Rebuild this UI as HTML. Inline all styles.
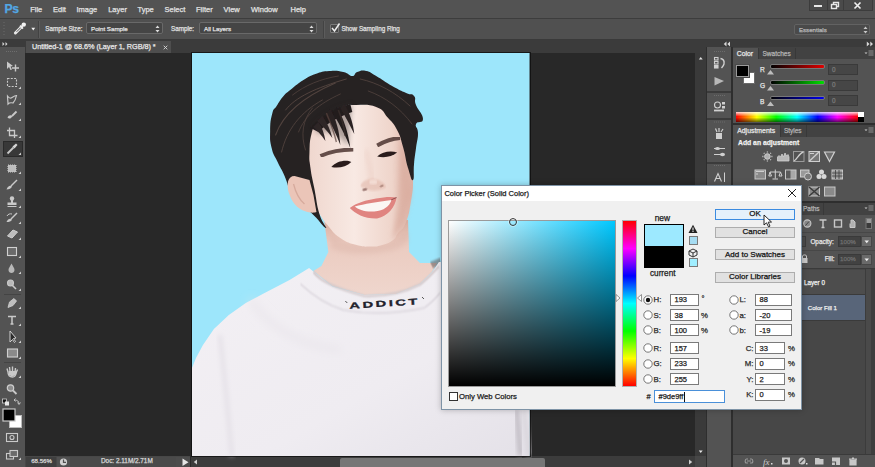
<!DOCTYPE html>
<html><head><meta charset="utf-8"><style>
*{margin:0;padding:0;box-sizing:border-box}
html,body{width:875px;height:467px;overflow:hidden;background:#535353;font-family:"Liberation Sans",sans-serif;position:relative}
.a{position:absolute}
.t{position:absolute;white-space:nowrap;line-height:1;-webkit-text-stroke:0.25px currentColor}
.ui{color:#dcdcdc}
svg{overflow:visible}
</style></head><body>
<div class="a" style="left:0px;top:0px;width:875px;height:18px;background:#535353;"></div>
<div class="a" style="left:0px;top:18px;width:875px;height:1px;background:#3d3d3d;"></div>
<div class="a" style="left:0px;top:19px;width:875px;height:21px;background:#505050;"></div>
<div class="a" style="left:0px;top:39px;width:875px;height:1px;background:#3a3a3a;"></div>
<div class="a" style="left:0px;top:40px;width:25px;height:427px;background:#535353;"></div>
<div class="a" style="left:0px;top:40px;width:25px;height:7px;background:#3b3b3b;"></div>
<div class="a" style="left:25px;top:40px;width:681px;height:13px;background:#3b3b3b;"></div>
<div class="a" style="left:25px;top:53px;width:670px;height:403px;background:#282828;"></div>
<div class="a" style="left:25px;top:456px;width:166px;height:11px;background:#474747;"></div>
<div class="a" style="left:191px;top:456px;width:504px;height:11px;background:#3c3c3c;"></div>
<div class="a" style="left:695px;top:53px;width:11px;height:403px;background:#3a3a3a;"></div>
<div class="a" style="left:695px;top:456px;width:11px;height:11px;background:#474747;"></div>
<div class="a" style="left:706px;top:40px;width:169px;height:7px;background:#3b3b3b;"></div>
<div class="a" style="left:706px;top:47px;width:1px;height:420px;background:#2e2e2e;"></div>
<div class="a" style="left:707px;top:47px;width:24px;height:420px;background:#535353;"></div>
<div class="a" style="left:731px;top:47px;width:2px;height:420px;background:#2e2e2e;"></div>
<div class="a" style="left:733px;top:47px;width:142px;height:420px;background:#535353;"></div>
<div class="t" style="left:4.5px;top:3.2px;font-size:12.2px;color:#52a7e4;font-weight:700;letter-spacing:-0.3px">Ps</div>
<div class="t" style="left:30.2px;top:5.5px;font-size:7.5px;color:#e2e2e2;font-weight:400;">File</div>
<div class="t" style="left:53px;top:5.5px;font-size:7.5px;color:#e2e2e2;font-weight:400;">Edit</div>
<div class="t" style="left:76.4px;top:5.5px;font-size:7.5px;color:#e2e2e2;font-weight:400;">Image</div>
<div class="t" style="left:108.2px;top:5.5px;font-size:7.5px;color:#e2e2e2;font-weight:400;">Layer</div>
<div class="t" style="left:137.5px;top:5.5px;font-size:7.5px;color:#e2e2e2;font-weight:400;">Type</div>
<div class="t" style="left:164.5px;top:5.5px;font-size:7.5px;color:#e2e2e2;font-weight:400;">Select</div>
<div class="t" style="left:196px;top:5.5px;font-size:7.5px;color:#e2e2e2;font-weight:400;">Filter</div>
<div class="t" style="left:223.6px;top:5.5px;font-size:7.5px;color:#e2e2e2;font-weight:400;">View</div>
<div class="t" style="left:251px;top:5.5px;font-size:7.5px;color:#e2e2e2;font-weight:400;">Window</div>
<div class="t" style="left:290.5px;top:5.5px;font-size:7.5px;color:#e2e2e2;font-weight:400;">Help</div>
<div class="a" style="left:809px;top:0px;width:64px;height:11px;background:#4a4a4a;border:1px solid #3c3c3c;border-top:none"></div>
<div class="a" style="left:827px;top:0px;width:1px;height:11px;background:#3c3c3c;"></div>
<div class="a" style="left:843px;top:0px;width:1px;height:11px;background:#3c3c3c;"></div>
<div class="a" style="left:814px;top:5px;width:8px;height:2px;background:#e8e8e8;"></div>
<svg class="a" style="left:830px;top:1px" width="11" height="9"><rect x="1.5" y="3.5" width="5" height="4" fill="none" stroke="#e8e8e8" stroke-width="1.4"/><path d="M3.5,3.5 V1.5 H8.5 V5.5 H6.5" fill="none" stroke="#e8e8e8" stroke-width="1.4"/></svg>
<svg class="a" style="left:853px;top:1px" width="10" height="9"><path d="M1.5,1.5 L7.5,7.5 M7.5,1.5 L1.5,7.5" stroke="#f0f0f0" stroke-width="1.6"/></svg>
<svg class="a" style="left:2px;top:21px" width="4" height="17"><path d="M2,1 V16" stroke="#6a6a6a" stroke-width="1" stroke-dasharray="1,2"/></svg>
<svg class="a" style="left:12px;top:21px" width="15" height="15"><path d="M3.4,12 L9.6,5.8" stroke="#e8e8e8" stroke-width="3" stroke-linecap="round"/><path d="M4.6,10.8 L9,6.4" stroke="#505050" stroke-width="1"/><path d="M8,4.6 L11,7.6" stroke="#eeeeee" stroke-width="1.6"/><circle cx="11.8" cy="3.6" r="2.2" fill="#f2f2f2"/></svg>
<svg class="a" style="left:31px;top:26.5px" width="5" height="4"><path d="M0.3,0.8 H4.2 L2.25,3.4 Z" fill="#f0f0f0"/></svg>
<div class="a" style="left:38px;top:21px;width:1px;height:17px;background:#434343;"></div>
<div class="a" style="left:39px;top:21px;width:1px;height:17px;background:#5c5c5c;"></div>
<div class="t" style="left:45.3px;top:25.7px;font-size:6.3px;color:#e0e0e0;font-weight:400;">Sample Size:</div>
<div class="a" style="left:86px;top:22.3px;width:77px;height:11.7px;background:#454545;border:1px solid #696969;border-radius:2px"></div><div class="t" style="left:91px;top:25.8px;font-size:6.2px;color:#e4e4e4;font-weight:400;">Point Sample</div><svg class="a" style="left:155px;top:25px" width="5" height="8"><path d="M0.5,3 L2.5,0.5 L4.5,3 Z M0.5,5 L2.5,7.5 L4.5,5 Z" fill="#dcdcdc"/></svg>
<div class="t" style="left:171px;top:25.7px;font-size:6.3px;color:#e0e0e0;font-weight:400;">Sample:</div>
<div class="a" style="left:199px;top:22.3px;width:118px;height:11.7px;background:#454545;border:1px solid #696969;border-radius:2px"></div><div class="t" style="left:204px;top:25.8px;font-size:6.2px;color:#e4e4e4;font-weight:400;">All Layers</div><svg class="a" style="left:309px;top:25px" width="5" height="8"><path d="M0.5,3 L2.5,0.5 L4.5,3 Z M0.5,5 L2.5,7.5 L4.5,5 Z" fill="#dcdcdc"/></svg>
<div class="a" style="left:323px;top:21px;width:1px;height:17px;background:#434343;"></div>
<div class="a" style="left:324px;top:21px;width:1px;height:17px;background:#5c5c5c;"></div>
<div class="a" style="left:330px;top:23.5px;width:9px;height:9px;background:#474747;border:1px solid #7a7a7a;border-radius:1px"></div>
<svg class="a" style="left:330px;top:22px" width="11" height="11"><path d="M2,6 L4.5,9 L9.5,1.5" stroke="#eeeeee" stroke-width="1.5" fill="none"/></svg>
<div class="t" style="left:341.4px;top:25.7px;font-size:6.3px;color:#e0e0e0;font-weight:400;">Show Sampling Ring</div>
<div class="a" style="left:794px;top:23.8px;width:76px;height:11.3px;background:#4a4a4a;border:1px solid #626262;border-radius:2px"></div>
<div class="t" style="left:799px;top:26.6px;font-size:6.1px;color:#b8b8b8;font-weight:400;">Essentials</div>
<svg class="a" style="left:863px;top:25.5px" width="5" height="8"><path d="M0.5,3 L2.5,0.5 L4.5,3 Z M0.5,5 L2.5,7.5 L4.5,5 Z" fill="#c8c8c8"/></svg>
<div class="a" style="left:26px;top:40.5px;width:145px;height:12.5px;background:#4e4e4e;"></div>
<div class="t" style="left:32px;top:43.3px;font-size:7.3px;color:#e8e8e8;font-weight:400;letter-spacing:-0.05px">Untitled-1 @ 68.6% (Layer 1, RGB/8) *</div>
<svg class="a" style="left:163px;top:44.5px" width="5" height="5"><path d="M0.7,0.7 L4.3,4.3 M4.3,0.7 L0.7,4.3" stroke="#d8d8d8" stroke-width="0.9"/></svg>
<svg class="a" style="left:192px;top:53px" width="337.5" height="403" viewBox="191 53 339 403" preserveAspectRatio="none">
<defs>
<filter id="b05" x="-10%" y="-10%" width="120%" height="120%"><feGaussianBlur stdDeviation="0.5"/></filter>
<filter id="b1" x="-10%" y="-10%" width="120%" height="120%"><feGaussianBlur stdDeviation="0.8"/></filter>
<filter id="b2" x="-30%" y="-30%" width="160%" height="160%"><feGaussianBlur stdDeviation="2.5"/></filter>
<filter id="b3" x="-50%" y="-50%" width="200%" height="200%"><feGaussianBlur stdDeviation="5"/></filter>
<linearGradient id="skin" x1="0" y1="0" x2="1" y2="0">
<stop offset="0" stop-color="#efd6cd"/><stop offset="0.45" stop-color="#f8e9e3"/><stop offset="0.8" stop-color="#efd5cb"/><stop offset="1" stop-color="#dcb1a4"/></linearGradient>
<linearGradient id="neck" x1="0" y1="0" x2="0" y2="1">
<stop offset="0" stop-color="#d7ad9f"/><stop offset="0.3" stop-color="#ebcbc0"/><stop offset="1" stop-color="#efd6cd"/></linearGradient>
<linearGradient id="shirt" x1="0" y1="0" x2="1" y2="1">
<stop offset="0" stop-color="#f3f0f4"/><stop offset="0.6" stop-color="#efecf1"/><stop offset="1" stop-color="#e4e1e8"/></linearGradient>
</defs>
<rect x="191" y="53" width="339" height="403" fill="#9de6fb"/>
<!-- neck -->
<path d="M324,222 L408,220 L409,252 L420,263 L437,263 L432,272 L420,284 L396,294 L364,295 L332,286 L313,271 L321,266 L328,252 Z" fill="url(#neck)" filter="url(#b05)"/>
<path d="M330,234 C345,248 395,248 407,230 L408,242 C395,256 345,257 330,248 Z" fill="#d3a99c" opacity="0.3" filter="url(#b2)"/>
<!-- face -->
<path d="M354.0,105.0 C362.3,105.0 366.1,102.8 376.0,106.0 C385.9,109.2 384.1,110.3 391.0,117.0 C397.9,123.7 397.6,122.2 402.0,131.0 C406.4,139.8 405.1,140.1 407.5,150.0 C409.9,159.9 409.5,160.0 411.0,168.0 C412.5,176.0 413.0,171.2 413.0,180.0 C413.0,188.8 413.0,189.5 411.0,201.0 C409.0,212.5 409.1,214.5 405.6,223.0 C402.1,231.5 401.4,228.5 398.0,233.0 C394.6,237.5 397.3,236.8 393.0,240.0 C388.7,243.2 387.9,243.3 382.0,245.0 C376.1,246.7 377.8,246.5 371.0,246.5 C364.2,246.5 364.8,247.3 356.5,245.0 C348.2,242.7 347.9,243.3 340.0,238.0 C332.1,232.7 332.6,231.4 327.0,225.0 C321.4,218.6 322.7,219.3 319.0,214.0 C315.3,208.7 314.7,211.7 313.0,205.0 C311.3,198.3 314.4,199.7 312.8,189.0 C311.2,178.3 308.8,175.4 307.0,165.0 C305.2,154.6 305.7,158.0 306.0,150.0 C306.3,142.0 305.6,142.2 308.0,135.0 C310.4,127.8 310.5,127.5 315.0,123.0 C319.5,118.5 319.7,120.9 325.0,118.0 C330.3,115.1 329.7,115.2 335.0,112.0 C340.3,108.8 339.9,107.9 345.0,106.0 C350.1,104.1 345.7,105.0 354.0,105.0 Z" fill="url(#skin)" filter="url(#b05)"/>
<!-- face right shadow -->
<path d="M400,135 L408,160 L411,195 L404,224 L392,240 L398,205 L399,170 Z" fill="#d6a596" opacity="0.55" filter="url(#b2)"/>
<!-- nose bridge shadow -->
<path d="M366,150 C368,162 371,172 372,182" stroke="#e0b8ab" stroke-width="3.5" fill="none" opacity="0.35" filter="url(#b2)"/>
<!-- hair behind ear and main hair -->
<path d="M310.0,168.0 C311.3,177.9 311.6,176.7 314.0,189.0 C316.4,201.3 315.9,203.6 319.0,214.0 C322.1,224.4 327.6,228.3 325.5,228.0 C323.4,227.7 317.8,219.1 311.0,213.0 C304.2,206.9 305.3,210.1 300.0,205.0 C294.7,199.9 295.3,201.7 291.0,194.0 C286.7,186.3 287.7,184.5 284.0,176.0 C280.3,167.5 280.5,169.5 277.0,162.0 C273.5,154.5 273.0,156.3 271.0,148.0 C269.0,139.7 269.4,140.1 269.5,131.0 C269.6,121.9 269.8,120.7 271.5,114.0 C273.2,107.3 272.9,110.8 276.0,106.0 C279.1,101.2 279.0,100.5 283.0,96.0 C287.0,91.5 285.7,93.3 291.0,89.0 C296.3,84.7 296.6,84.0 303.0,80.0 C309.4,76.0 308.1,76.4 315.0,74.0 C321.9,71.6 321.5,71.5 329.0,71.0 C336.5,70.5 336.9,70.7 343.0,72.0 C349.1,73.3 348.3,76.0 352.0,76.0 C355.7,76.0 353.3,73.3 357.0,72.0 C360.7,70.7 360.9,69.9 366.0,71.0 C371.1,72.1 369.1,72.0 376.0,76.0 C382.9,80.0 384.0,81.5 392.0,86.0 C400.0,90.5 400.1,90.3 406.0,93.0 C411.9,95.7 411.3,92.8 414.0,96.0 C416.7,99.2 413.6,98.9 416.0,105.0 C418.4,111.1 423.0,113.9 423.0,119.0 C423.0,124.1 417.3,120.3 416.0,124.0 C414.7,127.7 418.0,126.6 418.0,133.0 C418.0,139.4 417.1,139.7 416.0,148.0 C414.9,156.3 414.8,155.5 414.0,164.0 C413.2,172.5 414.6,178.9 413.0,180.0 C411.4,181.1 410.7,176.8 408.0,168.0 C405.3,159.2 405.9,157.1 403.0,147.0 C400.1,136.9 401.0,137.7 397.0,130.0 C393.0,122.3 393.6,124.1 388.0,118.0 C382.4,111.9 385.1,110.5 376.0,107.0 C366.9,103.5 362.3,105.3 354.0,105.0 C345.7,104.7 350.1,104.1 345.0,106.0 C339.9,107.9 340.3,108.8 335.0,112.0 C329.7,115.2 330.1,114.8 325.0,118.0 C319.9,121.2 319.7,119.7 316.0,124.0 C312.3,128.3 312.9,126.5 311.0,134.0 C309.1,141.5 309.3,142.9 309.0,152.0 C308.7,161.1 308.7,158.1 310.0,168.0 Z" fill="#262021" filter="url(#b05)"/>
<!-- bangs -->
<path d="M312,126 C322,114 338,106 352,104 C350,118 349,132 348,146 C340,136 330,128 318,134 Z" fill="#2a2223" opacity="0.35" filter="url(#b2)"/>
<path d="M310,128 C318,118 330,110 350,104 L352,112 C340,116 328,122 318,132 Z" fill="#221c1d" filter="url(#b05)"/>
<path d="M336,106 C343,118 348,132 350,148 C346,137 340,126 333,114 Z" fill="#241d1e" filter="url(#b05)"/>
<path d="M330,109 C336,120 339,131 340,145 C336,134 331,124 325,115 Z" fill="#2a2223" filter="url(#b05)"/>
<path d="M344,104 C350,114 353,124 354,134 C350,126 346,118 340,108 Z" fill="#2a2223" filter="url(#b05)"/>
<path d="M322,116 C327,123 330,130 332,138 C327,131 322,126 317,121 Z" fill="#2f2627" filter="url(#b05)"/>
<path d="M318,122 C322,128 324,134 325,141 C321,135 317,131 313,127 Z" fill="#2f2627" filter="url(#b05)"/>
<path d="M326,113 C331,125 334,133 336,142" stroke="#5b453e" stroke-width="1.4" fill="none" opacity="0.7"/>
<path d="M338,110 C342,120 344,128 345,136" stroke="#3a2e2c" stroke-width="1.6" fill="none" opacity="0.8"/>
<!-- hair highlights -->
<g fill="none" stroke="#64514a" stroke-linecap="round" opacity="0.7">
<path d="M275,135 C282,115 300,98 335,83" stroke-width="1.1"/>
<path d="M281,152 C286,130 300,112 322,100" stroke-width="0.9"/>
<path d="M285,110 C295,97 315,88 346,79" stroke-width="1"/>
<path d="M298,132 C305,115 318,104 340,94" stroke-width="0.8"/>
<path d="M292,95 C305,85 320,79 338,76" stroke-width="0.8"/>
<path d="M360,79 C378,83 395,92 410,106" stroke-width="0.9"/>
<path d="M368,91 C385,97 400,108 412,124" stroke-width="0.8"/>
<path d="M305,150 C300,135 302,120 312,108" stroke-width="0.8"/>
</g>
<!-- ear -->
<path d="M294,176 C287,176 286,184 288,192 C291,202 297,209 304,211 C309,213 314,213 316,212 L313,195 L309,180 Z" fill="#ebc5b8" filter="url(#b05)"/>
<path d="M293,184 C295,192 298,199 304,204" stroke="#c9998b" stroke-width="1.3" fill="none" opacity="0.6" filter="url(#b05)"/>
<!-- eyebrows -->
<path d="M320,156 C330,151.5 342,149.5 353,149.5" stroke="#4d3630" stroke-width="3.8" fill="none" opacity="0.85" filter="url(#b05)"/>
<path d="M377,145.5 C384,141.5 392,138.5 400,138" stroke="#4d3630" stroke-width="3.8" fill="none" opacity="0.85" filter="url(#b05)"/>
<!-- eyes -->
<path d="M331,167 C336,161 346,159.5 351,162 C346,167 338,168.5 331,167 Z" fill="#2a1c1c" filter="url(#b05)"/>
<path d="M377,156.5 C382,151.5 391,150.5 397,152.5 C392,157 384,158 377,156.5 Z" fill="#2a1c1c" filter="url(#b05)"/>
<!-- nose -->
<path d="M360,186 C362,181 368,178 374,179 C380,180 385,183 386,187 C382,191 368,193 360,186 Z" fill="#e2b9ac" opacity="0.6" filter="url(#b1)"/>
<ellipse cx="364.5" cy="189.5" rx="2.6" ry="1.3" fill="#7d5550" opacity="0.75" filter="url(#b05)" transform="rotate(-15 364.5 189.5)"/>
<ellipse cx="381.5" cy="186" rx="2.2" ry="1.1" fill="#8d6258" opacity="0.6" filter="url(#b05)" transform="rotate(-25 381.5 186)"/>
<ellipse cx="373" cy="182" rx="4" ry="2.5" fill="#fbeae4" opacity="0.6" filter="url(#b1)"/>
<!-- mouth -->
<path d="M349.5,208 C356,203 366,200 376,198.5 C384,197 391,196.5 396.5,197.5 C395,207 388,216 377,218.5 C365,219 355,214 349.5,208 Z" fill="#e08480" filter="url(#b05)"/>
<path d="M354.5,206.5 C364,204 377,202 391.5,200 C389,206.5 384,210.5 374,211.5 C364,212 358,209.5 354.5,206.5 Z" fill="#fbf6f3" filter="url(#b05)"/>
<path d="M391,200 C393,199 395,198 396.5,197.5" stroke="#5a2e2e" stroke-width="1" fill="none" opacity="0.6"/>
<!-- hair bit right shoulder -->
<path d="M430,262 L440,258 L441,266 L433,268 Z" fill="#6a6262" opacity="0.6" filter="url(#b1)"/>
<!-- shirt -->
<path d="M308.6,268 L289,280 L262,294 L245,303 L228,315 L213,329 L202,345 L195,358 L191,368 L191,456 L530,456 L530,262 L439,262 L432.8,271.4 L420,284 L396,294 L364,295 L332,286.4 L312.9,271.4 Z" fill="url(#shirt)" filter="url(#b05)"/>
<!-- collar seams -->
<path d="M312.9,272 C320,281 332,287 364,296 C380,296.5 400,294.5 420,284.5 C428,278.5 433,272.5 439,266.5" stroke="#d2c8ca" stroke-width="2.2" fill="none" filter="url(#b1)"/>
<path d="M300,284 C315,298 330,306 343,310 C370,315 400,313 424,308 C430,304 436,298 440,293" stroke="#d9d4db" stroke-width="1.5" fill="none" filter="url(#b1)"/>
<!-- ADDICT -->
<text x="349" y="306.5" font-family="Liberation Sans" font-weight="bold" font-size="8.6" letter-spacing="1.5" textLength="71" lengthAdjust="spacingAndGlyphs" stroke="#22222c" stroke-width="0.3" fill="#22222c" transform="rotate(-3.5 385 303)">ADDICT</text>
<path d="M345,301 L347,303 M422,297 L424,299" stroke="#555" stroke-width="1"/>
<!-- fold shadows -->
<path d="M219,335 C223,370 227,410 231,456" stroke="#e0dce3" stroke-width="3" fill="none" filter="url(#b2)"/>
<path d="M250,300 C270,330 300,345 340,350" stroke="#e6e2e8" stroke-width="4" fill="none" filter="url(#b3)"/>
<path d="M517,410 L521,456" stroke="#b5b0b8" stroke-width="4" fill="none" filter="url(#b2)"/>
<path d="M524,410 L530,456" stroke="#d5d2d8" stroke-width="4" fill="none" filter="url(#b2)"/>
</svg>
<div class="a" style="left:191px;top:52px;width:339.5px;height:405px;border:1px solid rgba(10,10,10,0.7)"></div>

<svg class="a" style="left:0;top:40px" width="25" height="427" viewBox="0 40 25 427">
<g fill="none" stroke="#c9c9c9" stroke-width="1.1">
<!-- header >> -->
<path d="M2.5,42 L4.5,44 L2.5,46 Z M5.5,42 L7.5,44 L5.5,46 Z" fill="#d8d8d8" stroke="none"/>
<path d="M6,51.5 H18" stroke="#6e6e6e" stroke-width="1" stroke-dasharray="1,1"/>
<!-- move -->
<path d="M7,61.5 L7,69 L9,67 L10.5,70 L12,69.5 L10.5,66.5 L13,66 Z" fill="#c9c9c9" stroke="none"/>
<path d="M15.5,64.5 V71.5 M12,68 H19" stroke-width="1.4"/>
<!-- marquee -->
<rect x="7.5" y="78.5" width="9" height="8" stroke-dasharray="2,1.3"/>
<!-- lasso -->
<path d="M7.5,96 C9,98 10,99 12,97.5 C13.5,96.5 15,95.5 16.5,95.5 C16,98 15,101 13,103 C11,102.5 9,103 8,104 C8,101 7.5,98.5 7.5,96 Z" stroke-width="1.2"/>
<!-- quick selection -->
<path d="M16.5,111.5 L12,116" stroke-width="1.8"/>
<path d="M7.5,117.5 C8.5,115 11,114.5 12.5,116 C11.5,118.5 9,119.5 7.5,117.5 Z" fill="#c9c9c9" stroke="none"/>
<!-- crop -->
<path d="M9.5,127.5 V135.5 H17.5 M7,130.5 H14.5 V138" stroke-width="1.3"/>
<!-- eyedropper selected -->
<rect x="3.5" y="141.5" width="19" height="15" fill="#383838" stroke="#2a2a2a" stroke-width="1"/>
<path d="M7.5,153.5 L13.5,147.5" stroke-width="1.8"/>
<path d="M12.5,146.5 L16,143.5 L17.5,145 L14.5,148.5 Z" fill="#d6d6d6" stroke="none"/>
<!-- healing -->
<rect x="8" y="165" width="8" height="7" fill="#bdbdbd" stroke="#c9c9c9" stroke-dasharray="1,1"/>
<!-- brush -->
<path d="M17,180 L11,186" stroke-width="1.5"/>
<path d="M6.5,189.5 C8,186 10,185 12,186.5 C11.5,188.5 9,189.5 6.5,189.5 Z" fill="#c9c9c9" stroke="none"/>
<!-- stamp -->
<circle cx="12" cy="198.5" r="2.2" fill="#c9c9c9" stroke="none"/>
<path d="M11,200 H13 V202.5 H16.5 V205 H7.5 V202.5 H11 Z" fill="#c9c9c9" stroke="none"/>
<path d="M7.5,206.5 H16.5" stroke-width="1"/>
<!-- history brush -->
<path d="M17,213 L11,219" stroke-width="1.5"/>
<path d="M6.5,222 C8,219 10,218 12,219.5 C11.5,221.5 9,222 6.5,222 Z" fill="#c9c9c9" stroke="none"/>
<path d="M7,216 C8,214 10,213.5 12,214" stroke-width="1"/>
<!-- eraser -->
<path d="M7.5,236 L13,230 L17.5,232 L12,238 Z" fill="#bdbdbd" stroke="#cfcfcf" stroke-width="1"/>
<!-- gradient -->
<rect x="7.5" y="247.5" width="9" height="8" fill="#6a6a6a" stroke="#d0d0d0" stroke-width="1.1"/>
<!-- blur drop -->
<path d="M11.5,263.5 C10,266.5 8.5,268 8.5,270 C8.5,272 10,273 11.5,273 C13,273 14.5,272 14.5,270 C14.5,268 13,266.5 11.5,263.5 Z" fill="#b8b8b8" stroke="none"/>
<!-- dodge -->
<circle cx="10.5" cy="283" r="3" fill="#b8b8b8" stroke="#c9c9c9"/>
<path d="M12.5,285.5 L16,289" stroke-width="1.6"/>
<path d="M4,294.5 H21" stroke="#444" stroke-width="1"/>
<!-- pen -->
<path d="M8,307.5 L9.5,302 L14,298.5 L16.5,301 L13,305.5 Z" fill="#bdbdbd" stroke="#cfcfcf" stroke-width="0.8"/>
<!-- type -->
<path d="M8,316.5 H16 M12,316.5 V324 M10.5,324 H13.5" stroke-width="1.5"/>
<!-- path select -->
<path d="M10,331 L10,342 L12.5,339.5 L14.5,342.5 L15.5,341.5 L13.5,338.5 L16,338 Z" fill="#2b2b2b" stroke="#cfcfcf" stroke-width="1"/>
<!-- rectangle -->
<rect x="7.5" y="349" width="10" height="8" fill="#8a8a8a" stroke="#cfcfcf" stroke-width="1.1"/>
<path d="M4,362.5 H21" stroke="#444" stroke-width="1"/>
<!-- hand -->
<path d="M8,372 L7,368.5 M10,371 L9.5,367 M12.5,371 L12.5,366.5 M15,372 L15.5,368 M8,372 C8,376 10,377 12.5,377 C15,377 16,375 16.5,372 L17.5,369.5" stroke-width="1.4"/>
<path d="M8.5,371 H16 V375 L12,376.5 L9,375 Z" fill="#c9c9c9" stroke="none"/>
<!-- zoom -->
<circle cx="10.5" cy="388" r="3.2" fill="#8e8e8e" stroke="#cfcfcf" stroke-width="1.2"/>
<path d="M13,390.5 L16.5,394" stroke-width="1.8"/>
<!-- small default colors & swap -->
<rect x="2.5" y="399" width="4" height="4" fill="#111" stroke="#cfcfcf" stroke-width="0.8"/>
<rect x="5" y="401.5" width="4" height="4" fill="#e8e8e8" stroke="none"/>
<path d="M14.5,400 C17,400 19,401 19,404 M17.5,402.5 L19,404.5 L20.5,402.5 M14,400 L15.5,398.5 M14,400 L15.5,401.5" stroke-width="0.9"/>
<!-- fg/bg -->
<rect x="9.5" y="415.5" width="12" height="12" fill="#ffffff" stroke="#bdbdbd" stroke-width="1"/>
<rect x="3" y="409" width="12" height="12" fill="#000000" stroke="#c8c8c8" stroke-width="1.2"/>
<!-- quick mask -->
<rect x="6.5" y="433.5" width="11" height="8" stroke-width="1.1"/>
<circle cx="12" cy="437.5" r="2" stroke-width="1.1"/>
<!-- screen mode -->
<rect x="6.5" y="453.5" width="7" height="5.5" stroke-width="1.1" fill="#535353"/>
<rect x="10" y="450.5" width="7.5" height="6" stroke-width="1.1" fill="#6a6a6a"/>
</g>
<g fill="#d0d0d0">
<path d="M18.5,89 L21,86.5 L21,89 Z"/>
<path d="M18.5,105 L21,102.5 L21,105 Z"/>
<path d="M18.5,121 L21,118.5 L21,121 Z"/>
<path d="M18.5,138 L21,135.5 L21,138 Z"/>
<path d="M18.5,155 L21,152.5 L21,155 Z"/>
<path d="M18.5,174 L21,171.5 L21,174 Z"/>
<path d="M18.5,191 L21,188.5 L21,191 Z"/>
<path d="M18.5,208 L21,205.5 L21,208 Z"/>
<path d="M18.5,224 L21,221.5 L21,224 Z"/>
<path d="M18.5,240 L21,237.5 L21,240 Z"/>
<path d="M18.5,258 L21,255.5 L21,258 Z"/>
<path d="M18.5,274 L21,271.5 L21,274 Z"/>
<path d="M18.5,291 L21,288.5 L21,291 Z"/>
<path d="M18.5,309 L21,306.5 L21,309 Z"/>
<path d="M18.5,326 L21,323.5 L21,326 Z"/>
<path d="M18.5,343 L21,340.5 L21,343 Z"/>
<path d="M18.5,359 L21,356.5 L21,359 Z"/>
<path d="M18.5,378 L21,375.5 L21,378 Z"/>
<path d="M18.5,460 L21,457.5 L21,460 Z"/>
</g>
</svg>

<div class="a" style="left:26px;top:457px;width:30px;height:10px;background:#3f3f3f"></div>
<div class="t" style="left:31.2px;top:458.3px;font-size:6.1px;color:#d8d8d8">68.56%</div>
<div class="a" style="left:57px;top:457px;width:13px;height:10px;background:#505050"></div>
<svg class="a" style="left:58px;top:457px" width="11" height="10"><circle cx="5.5" cy="5" r="3.6" fill="#cfcfcf"/><path d="M5.5,2.5 V5.3 H8" stroke="#505050" stroke-width="1.2" fill="none"/></svg>
<div class="a" style="left:70px;top:457px;width:106px;height:10px;background:#4a4a4a"></div>
<div class="t" style="left:101px;top:458.3px;font-size:6.4px;color:#d8d8d8">Doc: 2.11M/2.71M</div>
<div class="a" style="left:176px;top:457px;width:14px;height:10px;background:#4c4c4c"></div>
<svg class="a" style="left:182px;top:458px" width="8" height="9"><path d="M0.5,0.5 L6.5,4.2 L0.5,8 Z" fill="#e6e6e6"/></svg>
<div class="a" style="left:190px;top:456px;width:1px;height:11px;background:#2a2a2a"></div>
<svg class="a" style="left:193px;top:459px" width="5" height="6"><path d="M4,0.5 L0.8,3 L4,5.5 Z" fill="#cfcfcf"/></svg>
<div class="a" style="left:340px;top:458px;width:205px;height:9px;background:#767676;border-radius:2px 2px 0 0"></div>
<svg class="a" style="left:688px;top:459px" width="5" height="6"><path d="M1,0.5 L4.2,3 L1,5.5 Z" fill="#cfcfcf"/></svg>
<svg class="a" style="left:698px;top:56px" width="6" height="4"><path d="M0.8,3.5 L2.75,1 L4.7,3.5 Z" fill="#e0e0e0"/></svg>
<svg class="a" style="left:698px;top:450px" width="6" height="4"><path d="M0.8,0.5 L2.75,3 L4.7,0.5 Z" fill="#e8e8e8"/></svg>

<!-- dock header arrows -->
<svg class="a" style="left:723px;top:41px" width="8" height="6"><path d="M3.5,0.5 L0.8,3 L3.5,5.5 Z M7,0.5 L4.3,3 L7,5.5 Z" fill="#d8d8d8"/></svg>
<svg class="a" style="left:866px;top:41px" width="8" height="6"><path d="M0.8,0.5 L3.5,3 L0.8,5.5 Z M4.3,0.5 L7,3 L4.3,5.5 Z" fill="#d8d8d8"/></svg>
<!-- strip separators -->
<div class="a" style="left:707px;top:91px;width:24px;height:2px;background:#3b3b3b"></div>
<div class="a" style="left:707px;top:117.5px;width:24px;height:2px;background:#3b3b3b"></div>
<div class="a" style="left:707px;top:161.5px;width:24px;height:2px;background:#3b3b3b"></div>
<svg class="a" style="left:707px;top:47px" width="24" height="140" viewBox="707 47 24 140">
<g stroke="#6c6c6c" stroke-width="1" stroke-dasharray="1,1"><path d="M714,51.5 H725 M714,95.5 H725 M714,122 H725 M714,165.5 H725"/></g>
<g fill="none" stroke="#d0d0d0" stroke-width="1.1">
<!-- history -->
<rect x="714.5" y="57.5" width="3.5" height="2.5"/><rect x="714.5" y="61.5" width="3.5" height="2.5"/><rect x="714.5" y="65.5" width="3.5" height="2.5" fill="#d0d0d0"/>
<path d="M720.5,58.5 C723.5,59 724.5,61 724,64 C723.5,66 722.5,67 721.5,68" stroke-width="1.4"/>
<!-- play -->
<path d="M714.5,77 L724,81 L714.5,85.5 Z" fill="#b8b8b8" stroke="none"/>
<!-- 3d -->
<circle cx="717.5" cy="105" r="3" stroke-width="1.1"/>
<rect x="722" y="102" width="3" height="2.5" fill="#d0d0d0" stroke="none"/><rect x="722" y="106" width="3" height="2.5" fill="#d0d0d0" stroke="none"/>
<path d="M714,110.5 H724" stroke-width="1.8"/>
<!-- brush presets -->
<rect x="716" y="133" width="6" height="6" fill="#d0d0d0" stroke="none"/>
<path d="M717,132 L715.5,128.5 M719,132 L719,128 M721,132 L723,129" stroke-width="1.2"/>
<!-- sliders -->
<path d="M714,148.5 H725 M714,154.5 H724" stroke-width="1.2"/>
<ellipse cx="717.5" cy="148.5" rx="2.5" ry="1.5" fill="#d0d0d0" stroke="none"/>
<ellipse cx="722.5" cy="154.5" rx="2.5" ry="1.7" fill="#d0d0d0" stroke="none"/>
<!-- character -->
<path d="M714.5,181.5 L718,173.5 L721.5,181.5 M716,178.5 H720" stroke-width="1.1"/>
<path d="M724.5,172.5 V182" stroke-width="1"/>
</g>
</svg>

<!-- ===== Color panel ===== -->
<div class="a" style="left:733px;top:47px;width:142px;height:12px;background:#424242"></div>
<div class="a" style="left:733px;top:47.5px;width:25px;height:11.5px;background:#535353"></div>
<div class="a" style="left:758px;top:47.5px;width:1px;height:11.5px;background:#383838"></div>
<div class="a" style="left:795px;top:47.5px;width:1px;height:11.5px;background:#383838"></div>
<div class="t" style="left:736.8px;top:50.5px;font-size:6.8px;color:#e8e8e8">Color</div>
<div class="t" style="left:762.5px;top:50.5px;font-size:6.5px;color:#b4b4b4">Swatches</div>
<svg class="a" style="left:864px;top:50px" width="10" height="7"><path d="M0.5,2.5 H3.5 L2,4 Z" fill="#d0d0d0"/><g stroke="#9a9a9a" stroke-width="0.9"><path d="M4.5,1 H9.5 M4.5,3 H9.5 M4.5,5 H9.5"/></g></svg>
<div class="a" style="left:742.5px;top:71.5px;width:12.5px;height:12.5px;background:#ffffff;border:1px solid #6a6a6a"></div>
<div class="a" style="left:736px;top:64.5px;width:12.5px;height:12.5px;background:#000;border:1px solid #9a9a9a;box-shadow:0 0 0 1px #4a4a4a"></div>
<div class="t" style="left:760px;top:67px;font-size:6.6px;color:#e4e4e4">R</div>
<div class="t" style="left:760px;top:83px;font-size:6.6px;color:#e4e4e4">G</div>
<div class="t" style="left:760px;top:98.5px;font-size:6.6px;color:#e4e4e4">B</div>
<div class="a" style="left:769.5px;top:64px;width:55px;height:4.5px;border:1px solid #777;border-radius:2px;background:linear-gradient(90deg,#000,#e00000)"></div>
<div class="a" style="left:769.5px;top:80px;width:55px;height:4.5px;border:1px solid #777;border-radius:2px;background:linear-gradient(90deg,#000,#00e000)"></div>
<div class="a" style="left:769.5px;top:95.5px;width:55px;height:4.5px;border:1px solid #777;border-radius:2px;background:linear-gradient(90deg,#000,#0000f0)"></div>
<svg class="a" style="left:766px;top:69px" width="9" height="38"><path d="M1,5.5 L4.5,1 L8,5.5 Z M1,21.5 L4.5,17 L8,21.5 Z M1,37 L4.5,32.5 L8,37 Z" fill="#bdbdbd"/></svg>
<div class="a" style="left:828px;top:64px;width:30px;height:11px;background:#464646;border:1px solid #3a3a3a"></div>
<div class="a" style="left:828px;top:79.5px;width:30px;height:11px;background:#464646;border:1px solid #3a3a3a"></div>
<div class="a" style="left:828px;top:95px;width:30px;height:11px;background:#464646;border:1px solid #3a3a3a"></div>
<div class="t" style="left:832px;top:66.5px;font-size:6.4px;color:#7a7a7a">0</div>
<div class="t" style="left:832px;top:82px;font-size:6.4px;color:#7a7a7a">0</div>
<div class="t" style="left:832px;top:97.5px;font-size:6.4px;color:#7a7a7a">0</div>
<div class="a" style="left:736px;top:112px;width:122px;height:10px;background:linear-gradient(180deg,rgba(255,255,255,0.85),rgba(255,255,255,0) 45%,rgba(0,0,0,0) 55%,rgba(0,0,0,0.6)),linear-gradient(90deg,#ff0000,#ffff00 17%,#00ff00 33%,#00ffff 50%,#0000ff 67%,#ff00ff 83%,#ff0000)"></div>
<div class="a" style="left:858px;top:112px;width:6px;height:5px;background:#fff"></div>
<div class="a" style="left:858px;top:117px;width:6px;height:5px;background:#000"></div>

<!-- ===== Adjustments panel ===== -->
<div class="a" style="left:733px;top:123px;width:142px;height:1.5px;background:#2e2e2e"></div>
<div class="a" style="left:733px;top:124.5px;width:142px;height:12px;background:#424242"></div>
<div class="a" style="left:733px;top:124.5px;width:47px;height:12px;background:#535353"></div>
<div class="a" style="left:780px;top:124.5px;width:1px;height:12px;background:#383838"></div>
<div class="a" style="left:806px;top:124.5px;width:1px;height:12px;background:#383838"></div>
<div class="t" style="left:737.2px;top:127.5px;font-size:6.9px;color:#e8e8e8">Adjustments</div>
<div class="t" style="left:783.9px;top:127.5px;font-size:6.5px;color:#b4b4b4">Styles</div>
<svg class="a" style="left:864px;top:127px" width="10" height="7"><path d="M0.5,2.5 H3.5 L2,4 Z" fill="#d0d0d0"/><g stroke="#9a9a9a" stroke-width="0.9"><path d="M4.5,1 H9.5 M4.5,3 H9.5 M4.5,5 H9.5"/></g></svg>
<div class="t" style="left:738px;top:140px;font-size:6.8px;color:#f0f0f0;font-weight:700">Add an adjustment</div>
<svg class="a" style="left:750px;top:148px" width="100" height="52" viewBox="750 148 100 52">
<g fill="none" stroke="#cfcfcf" stroke-width="1">
<!-- sun -->
<circle cx="767.4" cy="156.5" r="2.8" fill="#b0b0b0"/>
<path d="M767.4,151.5 V152.5 M767.4,160.5 V161.5 M762.4,156.5 H763.4 M771.4,156.5 H772.4 M763.8,152.9 L764.5,153.6 M770.3,159.4 L771,160.1 M763.8,160.1 L764.5,159.4 M770.3,153.6 L771,152.9" stroke-width="1.3"/>
<!-- levels -->
<path d="M777.5,161 L777.5,157 L779,155.5 L780.5,157 L782,154 L783.5,157 L785,153 L786.5,156 L788,154.5 L789,157 L789,161 Z" fill="#b8b8b8" stroke="#d0d0d0" stroke-width="0.8"/>
<!-- curves -->
<rect x="793.5" y="151.5" width="10.5" height="10" stroke="#9a9a9a"/>
<path d="M794,161 C797,160 799,153 803.5,152" stroke-width="1.3"/>
<!-- exposure -->
<rect x="809" y="151.5" width="10.5" height="10" fill="#777"/>
<path d="M809,161.5 L819.5,151.5" stroke-width="1.3"/>
<path d="M810,153.5 H814" stroke-width="1"/>
<!-- vibrance -->
<path d="M824.5,152 H834.5 L829.5,161.5 Z" fill="#6e6e6e" stroke="#d0d0d0" stroke-width="1.2"/>
<!-- hue sat -->
<rect x="755" y="170" width="10.5" height="9" fill="#8a8a8a" stroke="#c8c8c8"/>
<path d="M756,171.5 H764 M757,173 V175" stroke-width="1"/>
<!-- balance -->
<path d="M775.3,169.5 V178.5 M770,172 H780.5 M770,172 L768.8,176 H771.5 Z M780.5,172 L779,176 H782 Z M772.5,179 H778" stroke-width="1"/>
<!-- b&w -->
<rect x="785.5" y="170" width="10.5" height="9" fill="#a8a8a8" stroke="#c8c8c8"/>
<rect x="786" y="170.5" width="4.5" height="8" fill="#5a5a5a" stroke="none"/>
<!-- photo filter -->
<rect x="800.5" y="170" width="8.5" height="7" fill="#9a9a9a" stroke="#cfcfcf"/>
<circle cx="808" cy="176.5" r="3.5" fill="#7a7a7a" stroke="#cfcfcf"/>
<!-- channel mixer -->
<circle cx="821.5" cy="172" r="2.5" fill="#d8d8d8" stroke="none"/>
<circle cx="819" cy="176.5" r="2.5" fill="#d8d8d8" stroke="none"/>
<circle cx="824" cy="176.5" r="2.5" fill="#d8d8d8" stroke="none"/>
<!-- lookup grid -->
<rect x="832" y="170" width="10.5" height="9" fill="#9a9a9a" stroke="#c8c8c8"/>
<path d="M835.5,170 V179 M839,170 V179 M832,173 H842.5 M832,176 H842.5" stroke="#404040" stroke-width="0.8"/>
<!-- row3 -->
<rect x="809" y="187" width="10.5" height="9" fill="#8a8a8a" stroke="#c8c8c8"/>
<path d="M809,187 L819.5,196 M819.5,187 L809,196" stroke="#3a3a3a" stroke-width="1.5"/>
<rect x="824.5" y="187" width="10.5" height="9" stroke="#c8c8c8" fill="#8a8a8a"/>
</g>
</svg>

<!-- ===== Layers panel ===== -->
<div class="a" style="left:733px;top:201px;width:142px;height:1.5px;background:#2e2e2e"></div>
<div class="a" style="left:733px;top:202.5px;width:142px;height:12px;background:#424242"></div>
<div class="a" style="left:822.5px;top:202.5px;width:1px;height:12px;background:#383838"></div>
<div class="t" style="left:803px;top:205.5px;font-size:6.5px;color:#b4b4b4">Paths</div>
<svg class="a" style="left:864px;top:205px" width="10" height="7"><path d="M0.5,2.5 H3.5 L2,4 Z" fill="#d0d0d0"/><g stroke="#9a9a9a" stroke-width="0.9"><path d="M4.5,1 H9.5 M4.5,3 H9.5 M4.5,5 H9.5"/></g></svg>
<svg class="a" style="left:800px;top:216px" width="75" height="56" viewBox="800 216 75 56">
<g fill="none" stroke="#c8c8c8" stroke-width="1.1">
<circle cx="807.3" cy="223.5" r="3.6" fill="#8a8a8a"/>
<path d="M805.5,225.5 L809,221.5" stroke="#444" stroke-width="1"/>
<path d="M819.5,220 H826.5 M823,220 V227.5 M821.5,227.5 H824.5" stroke-width="1.4"/>
<rect x="834.5" y="220" width="7" height="7" stroke-width="1.4"/>
<path d="M850,223.5 V227.5 H855 V222 L853,220 H851 V223.5" fill="#b0b0b0" stroke-width="1"/>
<rect x="866" y="218.5" width="5.5" height="10" fill="#3a3a3a" stroke="#777" stroke-width="1"/>
<rect x="866.5" y="219" width="4.5" height="4" fill="#9a9a9a" stroke="none"/>
</g>
</svg>
<div class="a" style="left:733px;top:232px;width:142px;height:1px;background:#474747"></div>
<div class="a" style="left:800px;top:236px;width:6px;height:11px;background:#4a4a4a;border:1px solid #3c3c3c"></div>
<div class="t" style="left:810.4px;top:238.5px;font-size:6.4px;color:#e6e6e6">Opacity:</div>
<div class="a" style="left:837.5px;top:236px;width:23px;height:11px;background:#424242;border:1px solid #3a3a3a"></div>
<div class="t" style="left:840px;top:238.5px;font-size:6.2px;color:#707070">100%</div>
<div class="a" style="left:860.5px;top:236px;width:11.5px;height:11px;background:#6a6a6a;border:1px solid #474747"></div>
<svg class="a" style="left:864px;top:240px" width="6" height="4"><path d="M0.5,0.5 H5 L2.75,3.2 Z" fill="#f0f0f0"/></svg>
<div class="a" style="left:733px;top:249.5px;width:142px;height:1px;background:#474747"></div>
<svg class="a" style="left:801px;top:253px" width="7" height="11"><path d="M1.5,5 V3 C1.5,1.5 5.5,1.5 5.5,3 V5" stroke="#c8c8c8" fill="none"/><rect x="0.5" y="5" width="6" height="5" fill="#c8c8c8"/></svg>
<div class="t" style="left:824.7px;top:256px;font-size:6.4px;color:#e6e6e6">Fill:</div>
<div class="a" style="left:837.5px;top:253.5px;width:23px;height:11px;background:#424242;border:1px solid #3a3a3a"></div>
<div class="t" style="left:840px;top:256px;font-size:6.2px;color:#707070">100%</div>
<div class="a" style="left:860.5px;top:253.5px;width:11.5px;height:11px;background:#6a6a6a;border:1px solid #474747"></div>
<svg class="a" style="left:864px;top:257.5px" width="6" height="4"><path d="M0.5,0.5 H5 L2.75,3.2 Z" fill="#f0f0f0"/></svg>
<div class="a" style="left:733px;top:267.5px;width:142px;height:1px;background:#3a3a3a"></div>
<!-- layers list -->
<div class="a" style="left:733px;top:269px;width:132px;height:186px;background:#474747"></div>
<div class="a" style="left:733px;top:270px;width:132px;height:24px;background:#4d4d4d"></div>
<div class="a" style="left:733px;top:294px;width:132px;height:1px;background:#3a3a3a"></div>
<div class="t" style="left:803.9px;top:280px;font-size:6.3px;color:#f0f0f0">Layer 0</div>
<div class="a" style="left:733px;top:295px;width:132px;height:25px;background:#586579"></div>
<div class="a" style="left:733px;top:320px;width:132px;height:1px;background:#3a3a3a"></div>
<div class="t" style="left:807.8px;top:305px;font-size:6.1px;color:#f0f0f0">Color Fill 1</div>
<div class="a" style="left:865px;top:269px;width:1px;height:186px;background:#3c3c3c"></div>
<div class="a" style="left:866px;top:269px;width:5px;height:186px;background:#4a4a4a"></div>
<div class="a" style="left:871px;top:269px;width:4px;height:186px;background:#3e3e3e"></div>
<!-- layers bottom bar -->
<div class="a" style="left:733px;top:454px;width:142px;height:1px;background:#3a3a3a"></div>
<div class="a" style="left:733px;top:455px;width:142px;height:12px;background:#535353"></div>
<svg class="a" style="left:740px;top:455px" width="130" height="12" viewBox="740 455 130 12">
<g fill="none" stroke="#9a9a9a" stroke-width="1.1">
<path d="M747,461 H751 M748,459 H746.5 C745,459 744.5,463 746.5,463 H748 M750,459 H751.5 C753,459 753.5,463 751.5,463 H750"/>
</g>
<text x="763" y="464.5" font-family="Liberation Serif" font-style="italic" font-size="9" fill="#cfcfcf">fx</text>
<rect x="771" y="463" width="1.5" height="1.5" fill="#ddd"/>
<rect x="782" y="457.5" width="8" height="7" fill="#c8c8c8"/><circle cx="786" cy="461" r="2" fill="#535353"/>
<circle cx="802" cy="461" r="3.5" fill="#c8c8c8"/><path d="M800,463 L804,459" stroke="#535353" stroke-width="1.2"/>
<rect x="806" y="463" width="1.5" height="1.5" fill="#ddd"/>
<path d="M815,458 H819 L820,459 H823.5 V464.5 H815 Z" fill="#c8c8c8"/>
<path d="M832,457.5 H840 V465 H832 Z" fill="#c8c8c8"/><path d="M832,462 H835.5 V465" stroke="#535353" stroke-width="1.2" fill="none"/>
<path d="M849,459 H857 M850,459.5 V465 H856 V459.5 M852,458 H854" stroke="#c8c8c8" stroke-width="1.2" fill="none"/><rect x="850" y="459.5" width="6" height="5.5" fill="#c8c8c8"/>
</svg>

<div class="a" style="left:441px;top:185px;width:361px;height:225px;background:#f0f0f0;border:1px solid #7e93a6;box-shadow:0 0 6px rgba(0,0,0,0.25)"></div>
<div class="a" style="left:442px;top:186px;width:359px;height:15px;background:#ffffff;"></div>
<div class="t" style="left:444.4px;top:189.5px;font-size:7.5px;color:#1a1a1a;font-weight:400;">Color Picker (Solid Color)</div>
<svg class="a" style="left:787px;top:188px" width="10" height="10"><path d="M1,1 L9,9 M9,1 L1,9" stroke="#222" stroke-width="1"/></svg>
<div class="a" style="left:448px;top:220px;width:168px;height:167px;background:#9a9a9a;"></div>
<div class="a" style="left:449px;top:221px;width:166px;height:165px;background:linear-gradient(180deg,rgba(0,0,0,0),#000),linear-gradient(90deg,#ffffff,#00c8ff);"></div>
<svg class="a" style="left:507px;top:216px" width="12" height="12"><circle cx="6" cy="6" r="3.5" fill="none" stroke="#333" stroke-width="1"/><circle cx="6" cy="6" r="4.5" fill="none" stroke="#fff" stroke-width="0.6" opacity="0.6"/></svg>
<div class="a" style="left:622px;top:220px;width:15px;height:167px;background:#b0b0b0;"></div>
<div class="a" style="left:623px;top:221px;width:13px;height:165px;background:linear-gradient(180deg,#ff0000,#ff00ff 16.7%,#0000ff 33.3%,#00ffff 50%,#00ff00 66.7%,#ffff00 83.3%,#ff0000);"></div>
<svg class="a" style="left:615px;top:293px" width="28" height="10"><path d="M1,1.5 L5,5 L1,8.5 Z M26.5,1.5 L22.5,5 L26.5,8.5 Z" fill="#fff" stroke="#7a7a7a" stroke-width="0.8"/></svg>
<div class="t" style="left:654.7px;top:214px;font-size:8.4px;color:#1a1a1a;font-weight:400;">new</div>
<div class="a" style="left:643.5px;top:223.5px;width:40px;height:44px;background:#000;"></div>
<div class="a" style="left:644.5px;top:224.5px;width:38px;height:21.5px;background:#9de9ff;"></div>
<div class="t" style="left:650px;top:270px;font-size:8.2px;color:#1a1a1a;font-weight:400;">current</div>
<svg class="a" style="left:688px;top:224px" width="11" height="10"><path d="M5,0.8 L9.5,9 H0.5 Z" fill="#222"/><rect x="4.5" y="3.5" width="1" height="3" fill="#fff"/><rect x="4.5" y="7" width="1" height="1" fill="#fff"/></svg>
<div class="a" style="left:688.5px;top:235.5px;width:9.5px;height:9.5px;background:#a6dcf2;border:1px solid #7a7a7a"></div>
<svg class="a" style="left:688px;top:248px" width="10" height="10"><path d="M5,1 L9,3 V7 L5,9 L1,7 V3 Z M1,3 L5,5 L9,3 M5,5 V9" fill="none" stroke="#333" stroke-width="1"/></svg>
<div class="a" style="left:688.5px;top:257.5px;width:9.5px;height:9.5px;background:#a0eeff;border:1px solid #7a7a7a"></div>
<div class="a" style="left:715px;top:208.5px;width:80px;height:11px;background:#e5f1fb;border:1px solid #3b8be0"></div><div class="t" style="left:715px;top:210.3px;width:80px;text-align:center;font-size:8px;color:#111">OK</div>
<div class="a" style="left:715px;top:226.5px;width:80px;height:11px;background:#e1e1e1;border:1px solid #adadad"></div><div class="t" style="left:715px;top:228.3px;width:80px;text-align:center;font-size:8px;color:#111">Cancel</div>
<div class="a" style="left:715px;top:249px;width:80px;height:11px;background:#e1e1e1;border:1px solid #adadad"></div><div class="t" style="left:715px;top:250.8px;width:80px;text-align:center;font-size:8px;color:#111">Add to Swatches</div>
<div class="a" style="left:715px;top:271.5px;width:80px;height:11px;background:#e1e1e1;border:1px solid #adadad"></div><div class="t" style="left:715px;top:273.3px;width:80px;text-align:center;font-size:8px;color:#111">Color Libraries</div>
<svg class="a" style="left:763px;top:214px" width="10" height="14"><path d="M1,1 L1,11 L3.5,8.8 L5.5,12.8 L7,12.1 L5.2,8.2 L8.5,8 Z" fill="#fff" stroke="#111" stroke-width="0.9"/></svg>
<svg class="a" style="left:642.5px;top:294.5px" width="10" height="10"><circle cx="5" cy="5" r="4.2" fill="#fff" stroke="#555" stroke-width="0.8"/><circle cx="5" cy="5" r="2.2" fill="#111"/></svg>
<div class="t" style="left:653.5px;top:296.1px;font-size:7.8px;color:#2a2a2a;font-weight:400;">H:</div>
<div class="a" style="left:670px;top:293.5px;width:29px;height:12px;background:#fff;border:1px solid #7a7a7a"></div><div class="t" style="left:674.5px;top:296.1px;font-size:7.5px;color:#1a1a1a;font-weight:400;">193</div>
<div class="t" style="left:701.5px;top:294.5px;font-size:7.5px;color:#2a2a2a;font-weight:400;">°</div>
<svg class="a" style="left:642.5px;top:310px" width="10" height="10"><circle cx="5" cy="5" r="4.2" fill="#fff" stroke="#555" stroke-width="0.8"/></svg>
<div class="t" style="left:653.5px;top:311.6px;font-size:7.8px;color:#2a2a2a;font-weight:400;">S:</div>
<div class="a" style="left:670px;top:309px;width:29px;height:12px;background:#fff;border:1px solid #7a7a7a"></div><div class="t" style="left:674.5px;top:311.6px;font-size:7.5px;color:#1a1a1a;font-weight:400;">38</div>
<div class="t" style="left:701px;top:311.6px;font-size:7.8px;color:#2a2a2a;font-weight:400;">%</div>
<svg class="a" style="left:642.5px;top:325.3px" width="10" height="10"><circle cx="5" cy="5" r="4.2" fill="#fff" stroke="#555" stroke-width="0.8"/></svg>
<div class="t" style="left:653.5px;top:326.90000000000003px;font-size:7.8px;color:#2a2a2a;font-weight:400;">B:</div>
<div class="a" style="left:670px;top:324.3px;width:29px;height:12px;background:#fff;border:1px solid #7a7a7a"></div><div class="t" style="left:674.5px;top:326.90000000000003px;font-size:7.5px;color:#1a1a1a;font-weight:400;">100</div>
<div class="t" style="left:701px;top:326.90000000000003px;font-size:7.8px;color:#2a2a2a;font-weight:400;">%</div>
<svg class="a" style="left:642.5px;top:343px" width="10" height="10"><circle cx="5" cy="5" r="4.2" fill="#fff" stroke="#555" stroke-width="0.8"/></svg>
<div class="t" style="left:653.5px;top:344.6px;font-size:7.8px;color:#2a2a2a;font-weight:400;">R:</div>
<div class="a" style="left:670px;top:342px;width:29px;height:12px;background:#fff;border:1px solid #7a7a7a"></div><div class="t" style="left:674.5px;top:344.6px;font-size:7.5px;color:#1a1a1a;font-weight:400;">157</div>
<svg class="a" style="left:642.5px;top:358.5px" width="10" height="10"><circle cx="5" cy="5" r="4.2" fill="#fff" stroke="#555" stroke-width="0.8"/></svg>
<div class="t" style="left:653.5px;top:360.1px;font-size:7.8px;color:#2a2a2a;font-weight:400;">G:</div>
<div class="a" style="left:670px;top:357.5px;width:29px;height:12px;background:#fff;border:1px solid #7a7a7a"></div><div class="t" style="left:674.5px;top:360.1px;font-size:7.5px;color:#1a1a1a;font-weight:400;">233</div>
<svg class="a" style="left:642.5px;top:374px" width="10" height="10"><circle cx="5" cy="5" r="4.2" fill="#fff" stroke="#555" stroke-width="0.8"/></svg>
<div class="t" style="left:653.5px;top:375.6px;font-size:7.8px;color:#2a2a2a;font-weight:400;">B:</div>
<div class="a" style="left:670px;top:373px;width:29px;height:12px;background:#fff;border:1px solid #7a7a7a"></div><div class="t" style="left:674.5px;top:375.6px;font-size:7.5px;color:#1a1a1a;font-weight:400;">255</div>
<svg class="a" style="left:729px;top:294.5px" width="10" height="10"><circle cx="5" cy="5" r="4.2" fill="#fff" stroke="#555" stroke-width="0.8"/></svg>
<div class="t" style="left:739.5px;top:296.1px;font-size:7.8px;color:#2a2a2a;font-weight:400;">L:</div>
<div class="a" style="left:755px;top:293.5px;width:37px;height:12px;background:#fff;border:1px solid #7a7a7a"></div><div class="t" style="left:759.5px;top:296.1px;font-size:7.5px;color:#1a1a1a;font-weight:400;">88</div>
<svg class="a" style="left:729px;top:310px" width="10" height="10"><circle cx="5" cy="5" r="4.2" fill="#fff" stroke="#555" stroke-width="0.8"/></svg>
<div class="t" style="left:739.5px;top:311.6px;font-size:7.8px;color:#2a2a2a;font-weight:400;">a:</div>
<div class="a" style="left:755px;top:309px;width:37px;height:12px;background:#fff;border:1px solid #7a7a7a"></div><div class="t" style="left:759.5px;top:311.6px;font-size:7.5px;color:#1a1a1a;font-weight:400;">-20</div>
<svg class="a" style="left:729px;top:325.3px" width="10" height="10"><circle cx="5" cy="5" r="4.2" fill="#fff" stroke="#555" stroke-width="0.8"/></svg>
<div class="t" style="left:739.5px;top:326.90000000000003px;font-size:7.8px;color:#2a2a2a;font-weight:400;">b:</div>
<div class="a" style="left:755px;top:324.3px;width:37px;height:12px;background:#fff;border:1px solid #7a7a7a"></div><div class="t" style="left:759.5px;top:326.90000000000003px;font-size:7.5px;color:#1a1a1a;font-weight:400;">-19</div>
<div class="t" style="left:735px;top:344.6px;width:18.5px;text-align:right;font-size:7.8px;color:#2a2a2a;font-weight:400">C:</div>
<div class="a" style="left:755px;top:342px;width:29.5px;height:12px;background:#fff;border:1px solid #7a7a7a"></div><div class="t" style="left:759.5px;top:344.6px;font-size:7.5px;color:#1a1a1a;font-weight:400;">33</div>
<div class="t" style="left:788px;top:344.6px;font-size:7.8px;color:#2a2a2a;font-weight:400;">%</div>
<div class="t" style="left:735px;top:360.1px;width:18.5px;text-align:right;font-size:7.8px;color:#2a2a2a;font-weight:400">M:</div>
<div class="a" style="left:755px;top:357.5px;width:29.5px;height:12px;background:#fff;border:1px solid #7a7a7a"></div><div class="t" style="left:759.5px;top:360.1px;font-size:7.5px;color:#1a1a1a;font-weight:400;">0</div>
<div class="t" style="left:788px;top:360.1px;font-size:7.8px;color:#2a2a2a;font-weight:400;">%</div>
<div class="t" style="left:735px;top:375.6px;width:18.5px;text-align:right;font-size:7.8px;color:#2a2a2a;font-weight:400">Y:</div>
<div class="a" style="left:755px;top:373px;width:29.5px;height:12px;background:#fff;border:1px solid #7a7a7a"></div><div class="t" style="left:759.5px;top:375.6px;font-size:7.5px;color:#1a1a1a;font-weight:400;">2</div>
<div class="t" style="left:788px;top:375.6px;font-size:7.8px;color:#2a2a2a;font-weight:400;">%</div>
<div class="t" style="left:735px;top:391.1px;width:18.5px;text-align:right;font-size:7.8px;color:#2a2a2a;font-weight:400">K:</div>
<div class="a" style="left:755px;top:388.5px;width:29.5px;height:12px;background:#fff;border:1px solid #7a7a7a"></div><div class="t" style="left:759.5px;top:391.1px;font-size:7.5px;color:#1a1a1a;font-weight:400;">0</div>
<div class="t" style="left:788px;top:391.1px;font-size:7.8px;color:#2a2a2a;font-weight:400;">%</div>
<div class="t" style="left:646.5px;top:392.8px;font-size:7.5px;color:#2a2a2a;font-weight:400;">#</div>
<div class="a" style="left:654px;top:390px;width:71px;height:13px;background:#fff;border:1px solid #4a90d9"></div>
<div class="t" style="left:658.5px;top:393px;font-size:7.5px;color:#1a1a1a;font-weight:400;">#9de9ff</div>
<div class="a" style="left:683.5px;top:391.5px;width:0.8px;height:10px;background:#111;"></div>
<div class="a" style="left:449px;top:392px;width:9px;height:9px;background:#fff;border:1px solid #333"></div>
<div class="t" style="left:459px;top:393.2px;font-size:7.7px;color:#1a1a1a;font-weight:400;">Only Web Colors</div>
</body></html>
